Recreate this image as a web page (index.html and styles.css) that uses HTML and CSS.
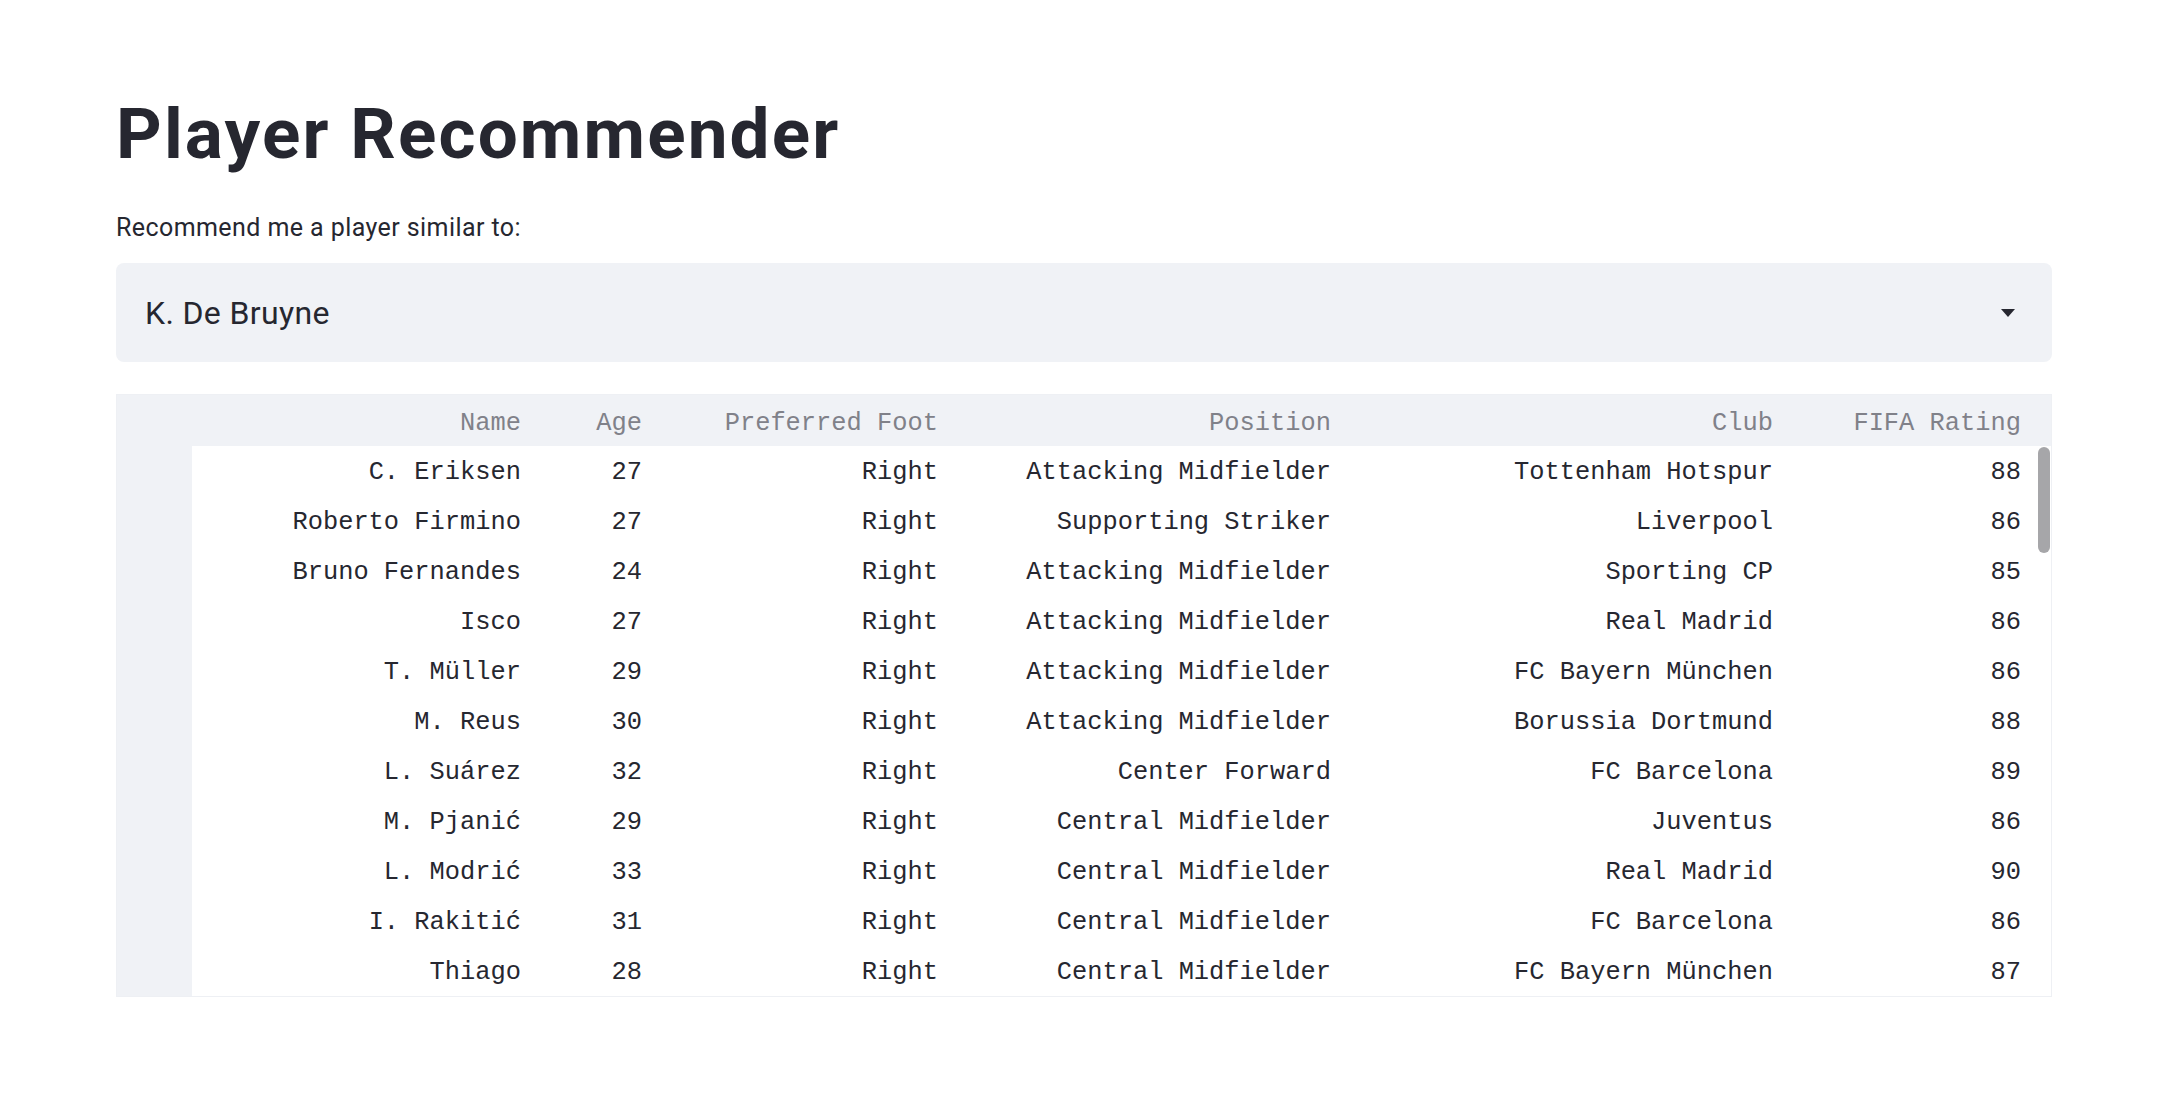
FILE: index.html
```html
<!DOCTYPE html>
<html lang="en">
<head>
<meta charset="utf-8">
<title>Player Recommender</title>
<link rel="stylesheet" href="styles.css">
</head>
<body>
<main class="app">
  <h1 class="title">Player Recommender</h1>
  <label class="label">Recommend me a player similar to:</label>
  <div class="select">
    <span class="select-value">K. De Bruyne</span>
    <svg class="caret" width="14" height="8" viewBox="0 0 14 8"><path d="M0 0 H14 L7 8 Z" fill="#262730"/></svg>
  </div>
  <div class="frame">
    <table class="grid">
      <colgroup>
        <col class="c-idx"><col class="c-name"><col class="c-age"><col class="c-foot"><col class="c-pos"><col class="c-club"><col class="c-rating"><col class="c-pad">
      </colgroup>
      <thead>
        <tr><th class="idx"></th><th>Name</th><th>Age</th><th>Preferred Foot</th><th>Position</th><th>Club</th><th>FIFA Rating</th><th></th></tr>
      </thead>
      <tbody>
        <tr><td class="idx"></td><td>C. Eriksen</td><td>27</td><td>Right</td><td>Attacking Midfielder</td><td>Tottenham Hotspur</td><td>88</td><td></td></tr>
        <tr><td class="idx"></td><td>Roberto Firmino</td><td>27</td><td>Right</td><td>Supporting Striker</td><td>Liverpool</td><td>86</td><td></td></tr>
        <tr><td class="idx"></td><td>Bruno Fernandes</td><td>24</td><td>Right</td><td>Attacking Midfielder</td><td>Sporting CP</td><td>85</td><td></td></tr>
        <tr><td class="idx"></td><td>Isco</td><td>27</td><td>Right</td><td>Attacking Midfielder</td><td>Real Madrid</td><td>86</td><td></td></tr>
        <tr><td class="idx"></td><td>T. Müller</td><td>29</td><td>Right</td><td>Attacking Midfielder</td><td>FC Bayern München</td><td>86</td><td></td></tr>
        <tr><td class="idx"></td><td>M. Reus</td><td>30</td><td>Right</td><td>Attacking Midfielder</td><td>Borussia Dortmund</td><td>88</td><td></td></tr>
        <tr><td class="idx"></td><td>L. Suárez</td><td>32</td><td>Right</td><td>Center Forward</td><td>FC Barcelona</td><td>89</td><td></td></tr>
        <tr><td class="idx"></td><td>M. Pjanić</td><td>29</td><td>Right</td><td>Central Midfielder</td><td>Juventus</td><td>86</td><td></td></tr>
        <tr><td class="idx"></td><td>L. Modrić</td><td>33</td><td>Right</td><td>Central Midfielder</td><td>Real Madrid</td><td>90</td><td></td></tr>
        <tr><td class="idx"></td><td>I. Rakitić</td><td>31</td><td>Right</td><td>Central Midfielder</td><td>FC Barcelona</td><td>86</td><td></td></tr>
        <tr><td class="idx"></td><td>Thiago</td><td>28</td><td>Right</td><td>Central Midfielder</td><td>FC Bayern München</td><td>87</td><td></td></tr>
      </tbody>
    </table>
    <div class="scrollbar"></div>
  </div>
</main>
</body>
</html>
```

FILE: styles.css
```css
html, body {
  margin: 0;
  padding: 0;
  background: #ffffff;
}

body {
  font-family: Roboto, "Noto Sans", "Liberation Sans", sans-serif;
  color: #262730;
}

.app {
  padding: 94px 108px 0 116px;
  display: flex;
  flex-direction: column;
}

.title {
  margin: 0;
  font-size: 71px;
  line-height: 80px;
  letter-spacing: 2.15px;
  font-weight: 700;
  color: #262730;
}

.label {
  margin-top: 39px;
  font-size: 25px;
  line-height: 30px;
  letter-spacing: 0.42px;
  color: #262730;
}

.select {
  margin-top: 20px;
  height: 99px;
  box-sizing: border-box;
  background: #f0f2f6;
  border-radius: 8px;
  display: flex;
  align-items: center;
  justify-content: space-between;
  padding: 0 37px 0 29px;
}

.select-value {
  font-size: 32px;
  letter-spacing: 0.35px;
  color: #262730;
}

.caret {
  display: block;
}

.frame {
  margin-top: 32px;
  position: relative;
  border: 1px solid #eef0f4;
  overflow: hidden;
}

.grid {
  width: 100%;
  border-collapse: collapse;
  table-layout: fixed;
  font-family: "Liberation Mono", "DejaVu Sans Mono", monospace;
  font-size: 25.4px;
}

.c-idx { width: 75px; }
.c-name { width: 329px; }
.c-age { width: 121px; }
.c-foot { width: 296px; }
.c-pos { width: 393px; }
.c-club { width: 442px; }
.c-rating { width: 248px; }

.grid th {
  height: 46px;
  padding: 5px 0 0 0;
  background: #f0f2f6;
  color: #808189;
  font-weight: 400;
  text-align: right;
  white-space: nowrap;
}

.grid td {
  height: 47px;
  padding: 3px 0 0 0;
  text-align: right;
  color: #262730;
  white-space: nowrap;
}

.grid .idx {
  background: #f0f2f6;
}

.scrollbar {
  position: absolute;
  right: 1px;
  top: 52px;
  width: 12px;
  height: 106px;
  border-radius: 6px;
  background: #a6a6a9;
}
```
